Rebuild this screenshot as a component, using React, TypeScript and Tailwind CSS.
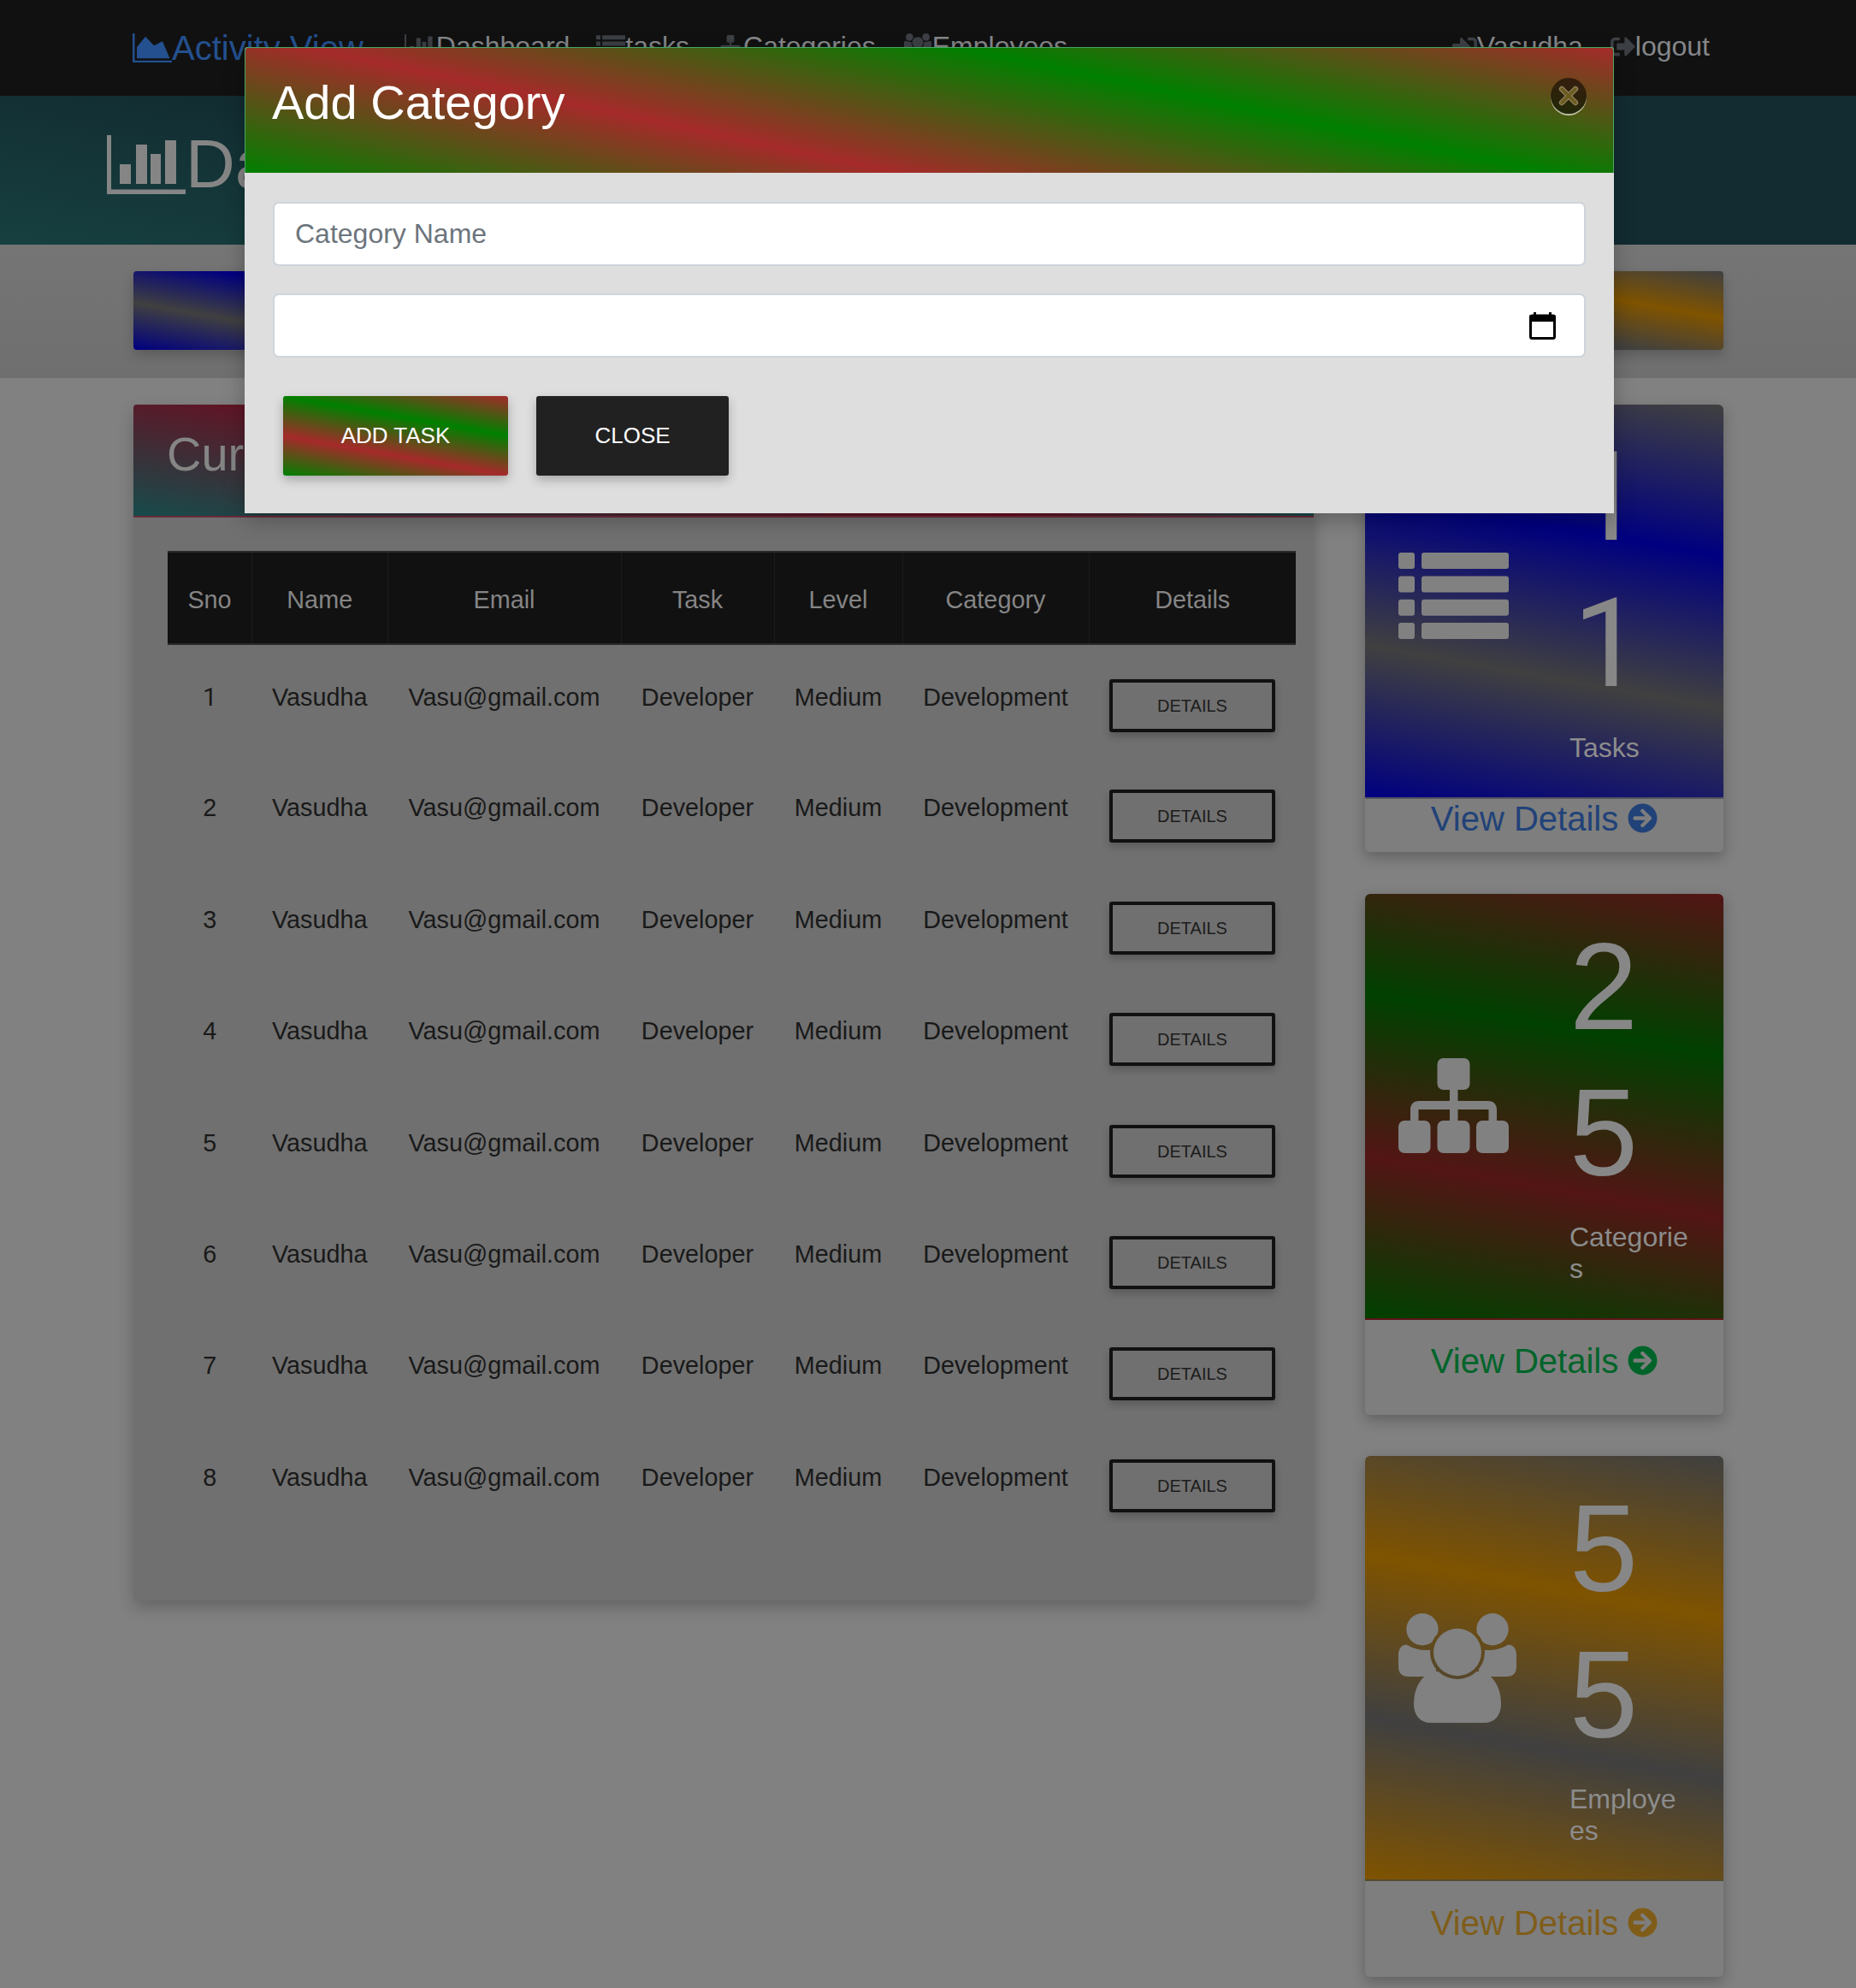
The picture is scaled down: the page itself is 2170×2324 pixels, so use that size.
import React from "react";
import { FaSignInAlt, FaSignOutAlt, FaArrowCircleRight } from "react-icons/fa";

function AreaIcon({ className = "" }: { className?: string }) {
  return (
    <svg viewBox="0 0 46 34" className={className} fill="currentColor">
      <rect x="0" y="0" width="2.5" height="34" />
      <rect x="0" y="31.8" width="46" height="2.2" />
      <path d="M5 29.3V16L15 3.7 25 14.3 35 9.3l8.5 20z" />
    </svg>
  );
}

function BarIcon({ className = "" }: { className?: string }) {
  return (
    <svg viewBox="0 0 92 69" className={className} fill="currentColor">
      <rect x="0" y="0" width="5" height="69" />
      <rect x="0" y="63.5" width="92" height="5.5" />
      <rect x="15" y="34" width="13" height="23" />
      <rect x="34" y="11" width="13" height="46" />
      <rect x="51" y="22" width="12" height="35" />
      <rect x="68" y="6" width="13" height="51" />
    </svg>
  );
}

function ListIcon({ className = "" }: { className?: string }) {
  return (
    <svg viewBox="0 0 129 101" className={className} fill="currentColor">
      {[0, 27.4, 54.8, 82].map((y) => (
        <g key={y}>
          <rect x="0" y={y} width="19" height="19" rx="3" />
          <rect x="27" y={y} width="102" height="19" rx="3" />
        </g>
      ))}
    </svg>
  );
}

function SitemapIcon({ className = "" }: { className?: string }) {
  return (
    <svg viewBox="0 0 129 111" className={className} fill="currentColor">
      <rect x="45.5" y="0" width="38" height="37" rx="7" />
      <rect x="60" y="36" width="9.5" height="40" />
      <path d="M14 76V60c0-6 4-10 10-10h81c6 0 10 4 10 10v16h-9.5V60h-82v16z" />
      <rect x="0" y="73" width="37.5" height="38" rx="7" />
      <rect x="45.5" y="73" width="38" height="38" rx="7" />
      <rect x="91" y="73" width="38" height="38" rx="7" />
    </svg>
  );
}

function UsersIcon({ className = "", id }: { className?: string; id: string }) {
  return (
    <svg viewBox="0 0 138 128" className={className} fill="currentColor">
      <mask id={id}>
        <rect width="138" height="128" fill="white" />
        <ellipse cx="69" cy="45.5" rx="32" ry="31.5" fill="black" />
      </mask>
      <g mask={`url(#${id})`}>
        <ellipse cx="28" cy="18.7" rx="18.7" ry="18.7" />
        <ellipse cx="110" cy="18.7" rx="18.7" ry="18.7" />
        <path d="M10 37c8 4 14 6 22 6h12v31H12C4 74 0 70 0 62V48c0-7 5-12 10-11z" />
        <path d="M128 37c-8 4-14 6-22 6H94v31h32c8 0 12-4 12-12V48c0-7-5-12-10-11z" />
        <path d="M18 106C18 84 30 68 46 68h46c16 0 28 16 28 38 0 14-8 22-20 22H38c-12 0-20-8-20-22z" />
      </g>
      <ellipse cx="69" cy="45.5" rx="28" ry="27.7" />
    </svg>
  );
}

function CalendarIcon() {
  return (
    <svg viewBox="0 0 31 32" className="w-[31px] h-[32px]" fill="#000">
      <rect x="5" y="0" width="3" height="5" />
      <rect x="23" y="0" width="3" height="5" />
      <rect x="0" y="3" width="31" height="8" rx="2" />
      <rect x="1.5" y="4" width="28" height="26.5" rx="2" fill="none" stroke="#000" strokeWidth="3" />
    </svg>
  );
}

function CloseIcon() {
  return (
    <svg viewBox="0 0 24 24" className="w-[24px] h-[24px]" fill="none" strokeLinecap="round">
      <path d="M4 4L20 20M20 4L4 20" stroke="#8a7c55" strokeWidth="6.5" />
      <path d="M4 4L20 20M20 4L4 20" stroke="#6b5a1e" strokeWidth="3.5" />
    </svg>
  );
}

const NAV_TEXT = "text-[32px] leading-[37px] text-[#85868a] whitespace-nowrap";

function NavItem({
  icon,
  label,
  className = "",
}: {
  icon: React.ReactNode;
  label: string;
  className?: string;
}) {
  return (
    <a className={`flex items-center ${NAV_TEXT} ${className}`}>
      <span className="text-[#3c4045] flex items-center">{icon}</span>
      {label}
    </a>
  );
}

const statCards = [
  {
    gradient: "bg-[linear-gradient(190deg,#404040,#000080,#404040,#000080)]",
    edge: "border-[#55555f]",
    number: "11",
    numberFont: "[font-family:Roboto,sans-serif] pl-[4px]",
    label: "Tasks",
    link: "text-[#214278]",
    footer: "h-[62px] pt-0",
    bodyHeight: "h-[461px]",
    icon: <ListIcon className="w-[129px] h-[101px] mb-[12px]" />,
  },
  {
    gradient: "bg-[linear-gradient(190deg,#531515,#004000,#531515,#004000)]",
    edge: "border-[#5a1515]",
    number: "25",
    numberFont: "",
    label: "Categories",
    link: "text-[#00642a]",
    footer: "h-[111px] pt-[25px]",
    bodyHeight: "h-[498px]",
    icon: <SitemapIcon className="w-[129px] h-[111px]" />,
  },
  {
    gradient: "bg-[linear-gradient(190deg,#404040,#7f5300,#404040,#7f5300)]",
    edge: "border-[#554a30]",
    number: "55",
    numberFont: "",
    label: "Employees",
    link: "text-[#7f5d19]",
    footer: "h-[112px] pt-[26px]",
    bodyHeight: "h-[497px]",
    icon: <UsersIcon id="usersLarge" className="w-[138px] h-[128px]" />,
  },
];

const rows = [1, 2, 3, 4, 5, 6, 7, 8];
const headers = ["Sno", "Name", "Email", "Task", "Level", "Category", "Details"];
const cellText = "text-center align-top pt-[40px] leading-[43px] px-0";

export default function App() {
  return (
    <div className="relative w-[2170px] h-[2324px] overflow-hidden bg-[#818181] [font-family:'Liberation_Sans',sans-serif]">
      {/* Navbar */}
      <nav className="h-[112px] bg-[#111111] flex items-center pl-[155px] pr-[171px] pb-[4px]">
        <a className="flex items-center mt-[3px] text-[40px] leading-[46px] text-[#24508f] whitespace-nowrap">
          <AreaIcon className="w-[46px] h-[34px]" />
          Activity View
        </a>
        <div className="flex items-center ml-[48px]">
          <NavItem icon={<BarIcon className="w-[37px] h-[28px]" />} label="Dashboard" />
          <NavItem className="ml-[31px]" icon={<ListIcon className="w-[34px] h-[27px]" />} label="tasks" />
          <NavItem className="ml-[33px]" icon={<SitemapIcon className="w-[30px] h-[26px]" />} label="Categories" />
          <NavItem className="ml-[32px]" icon={<UsersIcon id="usersNav" className="w-[34px] h-[30px]" />} label="Employees" />
        </div>
        <div className="flex items-center ml-auto">
          <NavItem icon={<FaSignInAlt className="w-[29px] h-[29px]" />} label="Vasudha" />
          <NavItem className="ml-[32px]" icon={<FaSignOutAlt className="w-[29px] h-[29px]" />} label="logout" />
        </div>
      </nav>

      {/* Title band */}
      <header className="h-[174px] bg-[linear-gradient(190deg,#122c31_60%,#174040)] pl-[125px] pt-[34px] flex items-start">
        <div className="flex items-center text-[80px] leading-[92px] text-[#858585] whitespace-nowrap">
          <BarIcon className="w-[92px] h-[69px]" />
          Dashboard
        </div>
      </header>

      {/* Summary strip */}
      <section className="h-[156px] bg-[linear-gradient(180deg,#757575,#6f6f6f)] pl-[156px] pr-[155px] pt-[31px]">
        <div className="grid grid-cols-4 gap-[59.67px]">
          <div className="h-[92px] rounded-[4px] shadow-[0_6px_14px_rgba(0,0,0,0.2)] bg-[linear-gradient(190deg,#404040,#000080,#404040,#000080)]" />
          <div className="h-[92px] rounded-[4px] shadow-[0_6px_14px_rgba(0,0,0,0.2)] bg-[linear-gradient(190deg,#531515,#004000,#531515,#004000)]" />
          <div className="h-[92px] rounded-[4px] shadow-[0_6px_14px_rgba(0,0,0,0.2)] bg-[linear-gradient(190deg,#6e0a1e,#004040,#6e0a1e,#004040)]" />
          <div className="h-[92px] rounded-[4px] shadow-[0_6px_14px_rgba(0,0,0,0.2)] bg-[linear-gradient(190deg,#404040,#7f5300,#404040,#7f5300)]" />
        </div>
      </section>

      {/* Main */}
      <main className="flex items-start justify-between pl-[156px] pr-[155px] pt-[31px]">
        <section className="w-[1380px] h-[1398px] bg-[#707070] rounded-[4px] shadow-[0_8px_18px_rgba(0,0,0,0.22)]">
          <div className="h-[132px] rounded-t-[4px] border-b-2 border-[#6a2a3a] bg-[linear-gradient(190deg,#174b4b_34%,#6e0a1e_52%,#174b4b_100%)] pl-[39px] pt-[26px] text-[56px] leading-[64px] text-[#858585]">
            Current Tasks
          </div>
          <div className="pl-[40px] pt-[39px]">
            <table className="w-[1319px] table-fixed border-collapse text-[28.8px] text-[#191919]">
              <colgroup>
                <col className="w-[98.5px]" />
                <col className="w-[158.5px]" />
                <col className="w-[273px]" />
                <col className="w-[179px]" />
                <col className="w-[150px]" />
                <col className="w-[218px]" />
                <col className="w-[242px]" />
              </colgroup>
              <thead>
                <tr className="h-[108px] bg-[#111111] border-y-2 border-[#2a2a2a]">
                  {headers.map((h) => (
                    <th
                      key={h}
                      className="font-normal text-[#858585] text-center pt-[5px] border-l border-[#1c1c1c] first:border-l-0"
                    >
                      {h}
                    </th>
                  ))}
                </tr>
              </thead>
              <tbody>
                {rows.map((n) => (
                  <tr key={n} className="h-[130.4px]">
                    <td className={`${cellText} ${n === 1 ? "[font-family:Roboto,sans-serif]" : ""}`}>{n}</td>
                    <td className={cellText}>Vasudha</td>
                    <td className={cellText}>Vasu@gmail.com</td>
                    <td className={cellText}>Developer</td>
                    <td className={cellText}>Medium</td>
                    <td className={cellText}>Development</td>
                    <td className="align-top pt-[40px] text-center">
                      <button className="w-[194px] h-[62px] border-4 border-[#111111] rounded-[3px] text-[20px] text-[#1c1c1c] shadow-[0_5px_10px_rgba(0,0,0,0.2)]">
                        DETAILS
                      </button>
                    </td>
                  </tr>
                ))}
              </tbody>
            </table>
          </div>
        </section>

        <aside className="w-[419px] flex flex-col gap-[48.5px] pb-[13px]">
          {statCards.map((c) => (
            <article
              key={c.label}
              className="rounded-[6px] bg-[#7e7e7e] shadow-[0_6px_16px_rgba(0,0,0,0.25)]"
            >
              <div
                className={`${c.bodyHeight} ${c.gradient} ${c.edge} border-b-2 rounded-t-[6px] flex`}
              >
                <div className="w-[239px] pl-[39px] flex items-center text-[#818181]">{c.icon}</div>
                <div className="w-[140px] pt-[23px] text-[#878787]">
                  <div className={`text-[144px] leading-[171px] break-all ${c.numberFont}`}>{c.number}</div>
                  <div className="mt-[18px] text-[32px] leading-[37px] text-[#8c8c8c] break-all">
                    {c.label}
                  </div>
                </div>
              </div>
              <a
                className={`${c.footer} ${c.link} flex items-start justify-center gap-[11px] text-[40px] leading-[46px]`}
              >
                View Details
                <FaArrowCircleRight className="w-[35px] h-[35px] mt-[5px]" />
              </a>
            </article>
          ))}
        </aside>
      </main>

      {/* Modal, over the page */}
      <div className="absolute left-[286px] top-[55px] w-[1601px] h-[545px] bg-[#dedede] rounded-t-[4px] shadow-[0_8px_24px_rgba(0,0,0,0.25)]">
        <div className="h-[147px] rounded-t-[4px] border border-b-0 border-[#4aa564] bg-[linear-gradient(192deg,#a52a2a,#008000,#a52a2a,#008000)] flex items-start justify-between pl-[31px] pr-[31px] pt-[32px]">
          <h1 className="text-[56px] leading-[64px] text-white font-normal">Add Category</h1>
          <button className="w-[42px] h-[42px] mt-[3px] rounded-full bg-[rgba(0,0,0,0.55)] shadow-[0_2px_0_rgba(255,255,255,0.6)] flex items-center justify-center">
            <CloseIcon />
          </button>
        </div>
        <div className="px-[33px] pt-[34px]">
          <input
            placeholder="Category Name"
            className="block w-full h-[75px] bg-white border-2 border-[#ced4da] rounded-[7px] px-[24px] text-[32px] outline-none placeholder:text-[#6c757d]"
          />
          <div className="mt-[32px] h-[75px] bg-white border-2 border-[#ced4da] rounded-[7px] flex items-center justify-end pr-[33px]">
            <CalendarIcon />
          </div>
          <div className="mt-[45px] ml-[12px] flex gap-[33px]">
            <button className="w-[263px] h-[93px] rounded-[3px] text-white text-[26px] shadow-[0_5px_12px_rgba(0,0,0,0.25)] bg-[linear-gradient(190deg,#a52a2a,#008000,#a52a2a,#008000)]">
              ADD TASK
            </button>
            <button className="w-[225px] h-[93px] rounded-[3px] text-white text-[26px] bg-[#212121] shadow-[0_5px_12px_rgba(0,0,0,0.25)]">
              CLOSE
            </button>
          </div>
        </div>
      </div>
    </div>
  );
}
